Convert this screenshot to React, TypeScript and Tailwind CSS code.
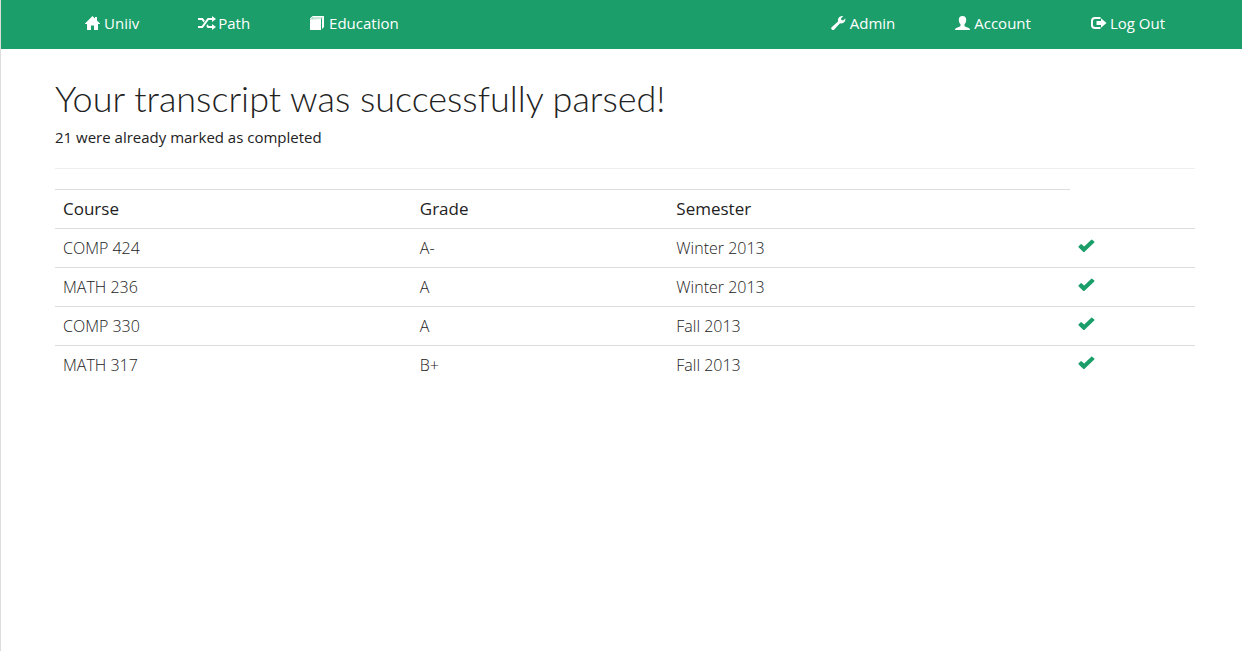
import type { ReactNode } from "react";

type IconName = "home" | "random" | "book" | "wrench" | "user" | "logout";

const icons: Record<IconName, ReactNode> = {
  home: (
    <path d="M7.5 0 0 7.6V8h2v6h4V9.5h3V14h4V8h2v-.4L12 4.600V1h-2v1.600z" />
  ),
  random: (
    <path
      transform="translate(-1 0)"
      d="M0 2h4.800l2 2.700-1.200 1.700L3.800 4H0zM0 10h3.800L9.600 2H14V0l4 3-4 3V4h-3.400L4.800 12H0zM9.600 8.300l1 1.700H14V8l4 3-4 3v-2H9.600L8.300 10z"
    />
  ),
  book: (
    <>
      <path d="M0 3.200V13.500Q0 14 .5 14H10.500Q11 14 11 13.500V3z" />
      <path d="M0 2.400 2 .4Q2.400 0 3 0H13.500Q14 0 14 .5V11L12 13V2.200H2.600V1.200H13V1H3L1.200 2.600H11.300V3H0z" />
    </>
  ),
  wrench: (
    <path d="M.4 11.500 7 5.500C6.500 3 7.500 1 10 .2Q11.200-.1 12.200.2L10 2.400l.4 1.700 1.800.4L14.400 2.300Q14.700 5 12.800 6.500 11.100 7.700 9 7.300L3 13.700Q2 14.500.8 13.500-.4 12.500.4 11.500z" />
  ),
  user: (
    <path d="M7.500 0C10 0 11.200 1.600 11.200 3.800c0 2-.8 3.500-1.700 4.500v1.300c0 .7.4.9 1.100 1.200l3.100 1.300q1.300.6 1.300 1.900H0q0-1.300 1.300-1.900l3.100-1.300c.7-.3 1.100-.5 1.100-1.200V8.300C4.600 7.300 3.800 5.800 3.800 3.800 3.800 1.600 5 0 7.500 0z" />
  ),
  logout: (
    <>
      <path d="M9.500 2H4Q1 2 1 5v4q0 3 3 3h5.500" fill="none" stroke="currentColor" strokeWidth="2" />
      <path d="M5.500 5H10V2.300L15.500 7 10 11.700V9H5.500z" />
    </>
  ),
};

function Icon({ name }: { name: IconName }) {
  return (
    <svg
      viewBox="0 0 15 14"
      fill="currentColor"
      className="h-[14px] w-[15px] shrink-0 overflow-visible"
      aria-hidden="true"
    >
      {icons[name]}
    </svg>
  );
}

function NavLink({ icon, children }: { icon: IconName; children: ReactNode }) {
  return (
    <li>
      <a
        href="#"
        className="flex items-center gap-1 px-[30px] pt-[11px] pb-3 text-[15px] leading-6 text-white hover:bg-[#178a59]"
      >
        <Icon name={icon} />
        <span>{children}</span>
      </a>
    </li>
  );
}

const courses = [
  { course: "COMP 424", grade: "A-", semester: "Winter 2013" },
  { course: "MATH 236", grade: "A", semester: "Winter 2013" },
  { course: "COMP 330", grade: "A", semester: "Fall 2013" },
  { course: "MATH 317", grade: "B+", semester: "Fall 2013" },
];

export default function App() {
  return (
    <div className="min-h-screen border-l border-[#dddddd] bg-white font-['Open_Sans',sans-serif] text-[#222222]">
      <header className="bg-[#1b9e69] pr-[47px] pb-[2px] pl-[54px]">
        <nav className="flex justify-between">
          <ul className="flex">
            <NavLink icon="home">Uniiv</NavLink>
            <NavLink icon="random">Path</NavLink>
            <NavLink icon="book">Education</NavLink>
          </ul>
          <ul className="flex">
            <NavLink icon="wrench">Admin</NavLink>
            <NavLink icon="user">Account</NavLink>
            <NavLink icon="logout">Log Out</NavLink>
          </ul>
        </nav>
      </header>

      <main className="pt-[26px] pr-[47px] pl-[54px]">
        <h1 className="font-['Lato',sans-serif] text-[36px] leading-[46px] font-light">
          Your transcript was successfully parsed!
        </h1>
        <p className="mt-1 text-[15px] leading-6">21 were already marked as completed</p>
        <hr className="mt-[19px] mb-5 border-[#eeeeee]" />

        <table className="w-full table-fixed border-collapse text-left text-[16px] leading-[22px]">
          <colgroup>
            <col className="w-[31.3%]" />
            <col className="w-[22.5%]" />
            <col className="w-[35.2%]" />
            <col />
          </colgroup>
          <thead className="text-[17px]">
            <tr>
              <th className="border-t border-[#dddddd] p-2 font-normal">Course</th>
              <th className="border-t border-[#dddddd] p-2 font-normal">Grade</th>
              <th className="border-t border-[#dddddd] p-2 font-normal">Semester</th>
            </tr>
          </thead>
          <tbody className="font-light">
            {courses.map((row) => (
              <tr key={row.course} className="border-t border-[#dddddd]">
                <td className="p-2">{row.course}</td>
                <td className="p-2">{row.grade}</td>
                <td className="p-2">{row.semester}</td>
                <td className="p-2">
                  <svg
                    viewBox="0 0 17 14"
                    className="mb-1 h-[14px] w-[17px] fill-[#1b9e69]"
                    role="img"
                    aria-label="Completed"
                  >
                    <path d="M.5 7.500 2.700 5.200Q3.100 4.900 3.500 5.200L6.200 7.600 13.300.7Q13.700.4 14.100.7L16.300 2.600Q16.600 3 16.300 3.400L6.300 12.900Q5.800 13.300 5.300 12.900L.5 8.200Q.2 7.900.5 7.500z" />
                  </svg>
                </td>
              </tr>
            ))}
          </tbody>
        </table>
      </main>
    </div>
  );
}
